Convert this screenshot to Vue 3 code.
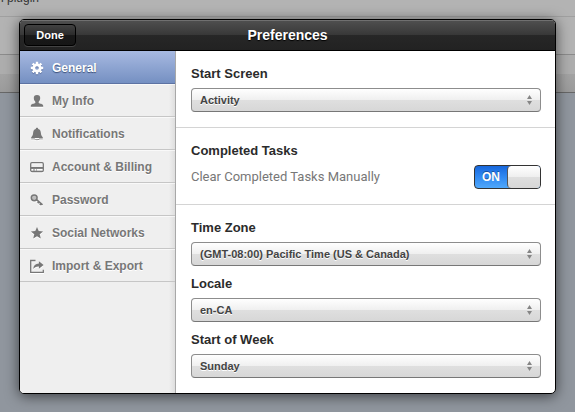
<script setup>
import { ref } from 'vue'

const sections = [
  { id: 'general', label: 'General' },
  { id: 'info', label: 'My Info' },
  { id: 'notifications', label: 'Notifications' },
  { id: 'billing', label: 'Account & Billing' },
  { id: 'password', label: 'Password' },
  { id: 'social', label: 'Social Networks' },
  { id: 'export', label: 'Import & Export' }
]
const active = ref('general')
const startScreen = ref('Activity')
const clearManually = ref(true)
const regional = ref([
  { id: 'zone', label: 'Time Zone', value: '(GMT-08:00) Pacific Time (US & Canada)' },
  { id: 'locale', label: 'Locale', value: 'en-CA' },
  { id: 'week', label: 'Start of Week', value: 'Sunday' }
])
</script>

<template>
  <div class="page">
    <div class="page-note">n plugin</div>
    <div class="page-row"></div>
    <div class="page-bar"></div>

    <div class="overlay">
      <section class="dialog" role="dialog" aria-labelledby="dialog-title">
        <header class="titlebar">
          <button class="done" type="button">Done</button>
          <h1 id="dialog-title">Preferences</h1>
        </header>

        <div class="body">
          <nav class="sidebar">
            <a
              v-for="item in sections"
              :key="item.id"
              :href="'#' + item.id"
              :class="['item', { active: active === item.id }]"
              @click.prevent="active = item.id"
            >
              <svg class="icon" viewBox="0 0 14 14" width="14" height="14" aria-hidden="true">
                <g v-if="item.id === 'general'">
                  <circle cx="7" cy="7" r="3.2" fill="none" stroke="currentColor" stroke-width="2.8" />
                  <path d="M7 .8v2.200M7 11v2.200M.8 7h2.200M11 7h2.200M2.600 2.600l1.600 1.600M9.800 9.800l1.600 1.600M11.400 2.600L9.800 4.200M4.200 9.800l-1.600 1.600" stroke="currentColor" stroke-width="2.400" />
                </g>
                <path v-else-if="item.id === 'info'" d="M7 1C4.700 1 3.800 2.300 3.800 4c0 1.700.7 3 1.500 3.800v1.300C4.300 9.800 1 9.800.8 11.800v1h12.400v-1c-.2-2-3.500-2-4.500-2.700V7.800c.8-.8 1.500-2.100 1.500-3.800 0-1.700-.9-3-3.200-3z" fill="currentColor" />
                <g v-else-if="item.id === 'notifications'" fill="currentColor">
                  <path d="M7 .8c-.8 0-1.200.5-1.200 1.200C3.800 2.600 3.200 4.200 3.100 6c-.1 2.200-.9 3.200-1.900 4.200v.8h11.600v-.8c-1-1-1.800-2-1.900-4.200-.1-1.800-.7-3.400-2.700-4C8.200 1.300 7.800.8 7 .8z" />
                  <path d="M1.200 11.600h3.600c.5 1.200 3.900 1.200 4.400 0h3.600v.7H9.500c-1 1.200-4 1.200-5 0H1.200z" />
                </g>
                <g v-else-if="item.id === 'billing'">
                  <rect x=".7" y="2.700" width="12.600" height="8.800" rx="1.200" fill="none" stroke="currentColor" stroke-width="1.300" />
                  <path d="M1 7h12v1.900H1z" fill="currentColor" />
                  <path d="M3 10h2M6 10h1" stroke="currentColor" />
                </g>
                <g v-else-if="item.id === 'password'">
                  <circle cx="4.200" cy="4.800" r="2.900" fill="currentColor" fill-opacity=".45" stroke="currentColor" stroke-width="1.500" />
                  <path d="M6.200 6.300l6.300 5.500M8.900 8.600l-1.100 1.600M11 10.400l-1.100 1.600" fill="none" stroke="currentColor" stroke-width="1.700" />
                </g>
                <path v-else-if="item.id === 'social'" d="M7 1l1.700 4.100 4.400.3-3.400 2.900 1.100 4.300L7 10.200l-3.800 2.400 1.100-4.300L.9 5.400l4.400-.3z" fill="currentColor" />
                <g v-else>
                  <path d="M5.500 1.500H.700v11.800h12.600v-2.600" fill="none" stroke="currentColor" stroke-width="1.300" />
                  <path d="M8.900 2.300L13.600 6 8.900 9.700V7.500C6.300 7.300 4.600 8.200 3.200 10c.2-3.400 2.200-5.400 5.700-5.600z" fill="currentColor" />
                </g>
              </svg>
              <span>{{ item.label }}</span>
            </a>
          </nav>

          <main class="content">
            <div class="group">
              <div class="field">
                <label for="start">Start Screen</label>
                <span class="picker">
                  <select id="start" v-model="startScreen">
                    <option>Activity</option>
                  </select>
                  <svg class="arrows" viewBox="0 0 5 10" width="5" height="10" aria-hidden="true">
                    <path d="M2.500 0L5 4H0zM0 6h5L2.500 10z" fill="#858585" />
                  </svg>
                </span>
              </div>
            </div>

            <div class="group">
              <div class="field">
                <h2>Completed Tasks</h2>
                <div class="toggle-row">
                  <label class="hint" for="clear">Clear Completed Tasks Manually</label>
                  <span class="switch">
                    <input id="clear" v-model="clearManually" type="checkbox" role="switch" />
                    <span class="on">ON</span>
                    <span class="knob"></span>
                  </span>
                </div>
              </div>
            </div>

            <div class="group">
              <div v-for="field in regional" :key="field.id" class="field">
                <label :for="field.id">{{ field.label }}</label>
                <span class="picker">
                  <select :id="field.id">
                    <option>{{ field.value }}</option>
                  </select>
                  <svg class="arrows" viewBox="0 0 5 10" width="5" height="10" aria-hidden="true">
                    <path d="M2.500 0L5 4H0zM0 6h5L2.500 10z" fill="#858585" />
                  </svg>
                </span>
              </div>
            </div>
          </main>
        </div>
      </section>
    </div>
  </div>
</template>

<style>
body {
  margin: 0;
}
</style>

<style scoped>
* {
  box-sizing: border-box;
}
.page {
  position: relative;
  min-height: 100vh;
  overflow: hidden;
  background: #90969e;
  font-family: "Liberation Sans", Arial, sans-serif;
}
.page-note {
  height: 27px;
  line-height: 16px;
  margin-top: -10px;
  border-bottom: 1px solid #a0a0a0;
  background: #b3b3b3;
  color: #333;
  font-size: 12px;
  text-indent: -3px;
}
.page-row {
  height: 38px;
  border-bottom: 1px solid #8b8b8b;
  background: #b3b3b3;
}
.page-bar {
  height: 38px;
  border-bottom: 1px solid #676767;
  background: linear-gradient(#adadad 0 19px, #a3a3a3 19px, #9b9b9b);
}
.overlay {
  position: absolute;
  inset: 0;
  padding: 19px;
}
.dialog {
  overflow: hidden;
  border: 1px solid #000;
  border-radius: 5px;
  background: #fff;
  box-shadow: 0 2px 14px rgba(0, 0, 0, 0.6);
}
.titlebar {
  display: grid;
  grid-template-columns: 1fr auto 1fr;
  align-items: center;
  height: 31px;
  padding: 0 4px;
  border-bottom: 1px solid #000;
  background: linear-gradient(#505050, #383838 50%, #272727 50%, #222);
  box-shadow: inset 0 1px #707070;
  color: #fff;
}
h1 {
  margin: 0;
  font-size: 14px;
  line-height: 16px;
  text-shadow: 0 1px 1px #000;
}
.done {
  justify-self: start;
  width: 52px;
  height: 22px;
  padding: 0;
  border: 1px solid #000;
  border-radius: 4px;
  background: linear-gradient(#424242, #2b2b2b 50%, #191919 50%, #161616);
  box-shadow: 0 1px rgba(255, 255, 255, 0.15);
  color: #fff;
  font: bold 11px/16px "Liberation Sans", Arial, sans-serif;
}
.body {
  display: flex;
}
.sidebar {
  flex: 0 0 156px;
  border-right: 1px solid #a8a8a8;
  background: linear-gradient(to left, #dedede, #efefef 6px);
}
.item {
  display: flex;
  align-items: center;
  gap: 8px;
  height: 33px;
  padding: 2px 10px 0;
  border-bottom: 1px solid #c6c6c6;
  box-shadow: inset 0 1px rgba(255, 255, 255, 0.6);
  color: #777;
  font-size: 12px;
  font-weight: bold;
  line-height: 16px;
  text-decoration: none;
  text-shadow: 0 1px #fff;
}
.icon {
  flex: none;
  filter: drop-shadow(0 1px 0 #fff);
}
.active {
  border-bottom-color: #5d73a3;
  background: linear-gradient(#a7b9e1, #7590c2);
  box-shadow: none;
  color: #fff;
  text-shadow: 0 1px 1px #3c4f78;
}
.active .icon {
  filter: drop-shadow(0 1px 0 #5d73a3);
}
.content {
  flex: 1;
  min-width: 0;
}
.group {
  display: grid;
  gap: 10px;
  padding: 15px 14px 15px 15px;
  border-bottom: 1px solid #d4d4d4;
}
.group:last-child {
  border-bottom: 0;
}
.field {
  display: grid;
  gap: 6px;
  color: #2b2b2b;
  font-size: 13px;
  font-weight: bold;
  line-height: 16px;
}
h2 {
  margin: 0;
  font-size: 13px;
  line-height: 16px;
}
.picker {
  position: relative;
  display: grid;
}
select {
  appearance: none;
  width: 100%;
  height: 24px;
  padding: 0 24px 0 8px;
  border: 1px solid #8d8d8d;
  border-bottom-color: #777;
  border-radius: 4px;
  background: linear-gradient(#fff, #efefef 50%, #dfdfdf 50%, #d7d7d7);
  color: #444;
  font: bold 11px/16px "Liberation Sans", Arial, sans-serif;
  text-shadow: 0 1px #fff;
}
.arrows {
  position: absolute;
  top: 7px;
  right: 9px;
  pointer-events: none;
}
.toggle-row {
  display: flex;
  align-items: center;
  justify-content: space-between;
}
.hint {
  color: #777;
  font-family: Roboto, "Noto Sans", sans-serif;
  font-size: 13px;
  font-weight: normal;
}
.switch {
  position: relative;
  display: flex;
  width: 67px;
  height: 24px;
  overflow: hidden;
  border: 1px solid #333;
  border-radius: 4px;
  background: linear-gradient(#1767dc, #3089f2 50%, #50a8fb);
}
.switch input {
  position: absolute;
  inset: 0;
  width: 100%;
  height: 100%;
  margin: 0;
  opacity: 0;
}
.on {
  flex: 1;
  color: #fff;
  font-size: 12px;
  line-height: 22px;
  text-align: center;
  text-shadow: 0 -1px #1a4f9c;
}
.knob {
  flex: 0 0 33px;
  border-left: 1px solid #555;
  border-radius: 4px 0 0 4px;
  background: linear-gradient(#fff, #efefef 50%, #dfdfdf 50%, #d7d7d7);
}
</style>
